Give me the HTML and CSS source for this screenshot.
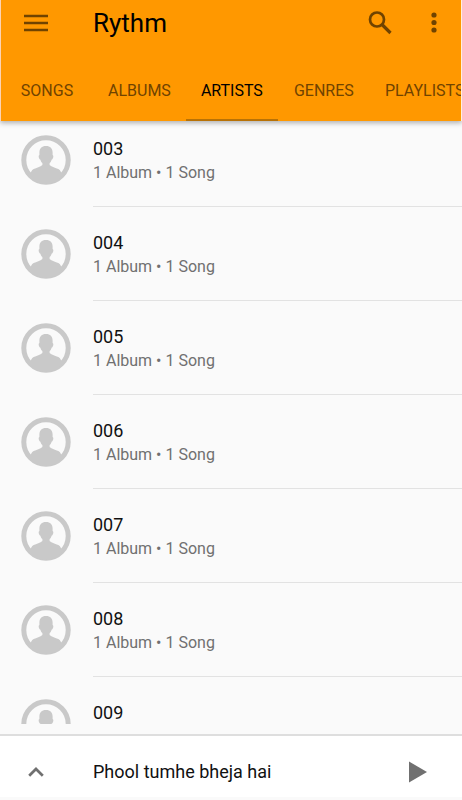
FILE: index.html
```html
<!DOCTYPE html>
<html lang="en">
<head>
<meta charset="utf-8">
<meta name="viewport" content="width=device-width, initial-scale=1">
<title>Rythm</title>
<link rel="stylesheet" href="styles.css">
</head>
<body>
<svg class="defs" aria-hidden="true">
  <symbol id="avatar" viewBox="0 0 50 50">
    <circle cx="25" cy="25" r="22.2" fill="none" stroke="currentColor" stroke-width="5"/>
    <path fill="currentColor" d="M25 11c4.300 0 6.600 2.500 6.600 6.500v2.500c1 .2 1 2.500-.1 4-.3.500-.6.700-.9.800-.4 1.500-1 2.500-2 3.300V30c2 2.200 6 2.700 8.700 4 2.200 1 3 3 3.700 7C37 46 31 49 25 49S13 46 9 41c.7-4 1.500-6 3.700-7 2.700-1.300 6.700-1.800 8.700-4v-1.900c-1-.8-1.600-1.800-2-3.300-.3-.1-.6-.3-.9-.8-1.100-1.500-1.100-3.800-.1-4v-2.500c0-4 2.300-6.500 6.600-6.500z"/>
  </symbol>
</svg>
<div class="app">
  <header class="header">
    <div class="toolbar">
      <button class="icon-button" aria-label="Menu"><svg width="24" height="18" viewBox="0 0 24 18"><path fill="currentColor" d="M0 .800h24v2.400H0zM0 7.800h24v2.400H0zM0 14.800h24v2.400H0z"/></svg></button>
      <h1 class="title">Rythm</h1>
      <button class="icon-button" aria-label="Search"><svg width="24" height="24" viewBox="0 0 24 24" fill="none" stroke="currentColor"><circle cx="9" cy="8.500" r="7" stroke-width="2.700"/><path d="M14 13.500l8.500 8.500" stroke-width="3.200"/></svg></button>
      <button class="icon-button" aria-label="More options"><svg width="6" height="22" viewBox="0 0 6 22" fill="currentColor"><circle cx="3" cy="3" r="2.600"/><circle cx="3" cy="10.500" r="2.600"/><circle cx="3" cy="18" r="2.600"/></svg></button>
    </div>
    <nav class="tabs">
      <a class="tab" href="#songs">SONGS</a>
      <a class="tab" href="#albums">ALBUMS</a>
      <a class="tab active" href="#artists" aria-current="page">ARTISTS</a>
      <a class="tab" href="#genres">GENRES</a>
      <a class="tab" href="#playlists">PLAYLISTS</a>
    </nav>
  </header>
  <main class="content">
    <ul class="list">
      <li class="row"><svg class="avatar"><use href="#avatar"/></svg><div class="info"><h2 class="name">003</h2><p class="meta">1 Album • 1 Song</p></div></li>
      <li class="row"><svg class="avatar"><use href="#avatar"/></svg><div class="info"><h2 class="name">004</h2><p class="meta">1 Album • 1 Song</p></div></li>
      <li class="row"><svg class="avatar"><use href="#avatar"/></svg><div class="info"><h2 class="name">005</h2><p class="meta">1 Album • 1 Song</p></div></li>
      <li class="row"><svg class="avatar"><use href="#avatar"/></svg><div class="info"><h2 class="name">006</h2><p class="meta">1 Album • 1 Song</p></div></li>
      <li class="row"><svg class="avatar"><use href="#avatar"/></svg><div class="info"><h2 class="name">007</h2><p class="meta">1 Album • 1 Song</p></div></li>
      <li class="row"><svg class="avatar"><use href="#avatar"/></svg><div class="info"><h2 class="name">008</h2><p class="meta">1 Album • 1 Song</p></div></li>
      <li class="row"><svg class="avatar"><use href="#avatar"/></svg><div class="info"><h2 class="name">009</h2></div></li>
    </ul>
  </main>
  <footer class="player">
    <button class="icon-button" aria-label="Expand player"><svg width="16" height="10" viewBox="0 0 16 10"><path d="M1.200 8.800L8 2l6.800 6.800" fill="none" stroke="currentColor" stroke-width="2.700"/></svg></button>
    <span class="track">Phool tumhe bheja hai</span>
    <button class="icon-button play" aria-label="Play"><svg width="18" height="22" viewBox="0 0 18 22"><path fill="currentColor" d="M0 0.500v21L18 11z"/></svg></button>
  </footer>
</div>
</body>
</html>
```
FILE: styles.css
```css
* { box-sizing: border-box; }

body {
  margin: 0;
  background: #fafafa;
  font-family: Roboto, "Liberation Sans", sans-serif;
  color: #111;
}

.defs {
  position: absolute;
  width: 0;
  height: 0;
}

.app {
  display: flex;
  flex-direction: column;
  height: 100vh;
  padding-bottom: 3px;
  overflow: hidden;
}

.header {
  position: relative;
  flex: none;
  border-left: 1px solid #fcd3b4;
  border-right: 1px solid #fff0dc;
  background: #ff9800;
  box-shadow: 0 2px 5px rgba(0, 0, 0, 0.3);
}

.toolbar {
  display: flex;
  align-items: center;
  height: 46px;
  padding: 0 0 0 8px;
}

.icon-button {
  display: flex;
  flex: none;
  align-items: center;
  justify-content: center;
  width: 54px;
  height: 46px;
  padding: 0;
  border: 0;
  background: none;
  color: #704300;
}

.title {
  flex: 1;
  margin: 0 0 0 30px;
  font-size: 26px;
  font-weight: 400;
  line-height: 46px;
  color: #000;
}

.tabs {
  display: flex;
  padding-top: 13px;
  overflow: hidden;
}

.tab {
  flex: none;
  min-width: 92px;
  height: 62px;
  padding: 0 15px;
  border-bottom: 2px solid transparent;
  font-size: 16px;
  line-height: 64px;
  text-align: center;
  text-decoration: none;
  color: #704300;
}

.tab.active {
  border-bottom-color: #b87206;
  color: #000;
}

.content {
  flex: 1;
  min-height: 0;
  margin-bottom: 10px;
  overflow: hidden;
}

.list {
  margin: 0;
  padding: 0;
  list-style: none;
  margin-top: -8px;
}

.row {
  display: flex;
  height: 94px;
  padding-left: 21px;
}

.avatar {
  flex: none;
  width: 50px;
  height: 50px;
  margin: 22px 22px 0 0;
  color: #c9c9c9;
}

.info {
  flex: 1;
  padding-top: 24px;
  border-bottom: 1px solid #e2e2e2;
}

.name,
.meta {
  margin: 0;
  font-weight: 400;
  line-height: 24px;
}

.name { font-size: 18px; }

.meta {
  font-size: 16px;
  color: #707070;
}

.player {
  display: flex;
  flex: none;
  align-items: center;
  height: 63px;
  padding: 10px 17px 0 9px;
  border-top: 2px solid #dedede;
  background: #fff;
}

.player .icon-button { color: #707070; }

.track {
  flex: 1;
  margin-left: 30px;
  font-size: 18px;
  line-height: 24px;
}
```
